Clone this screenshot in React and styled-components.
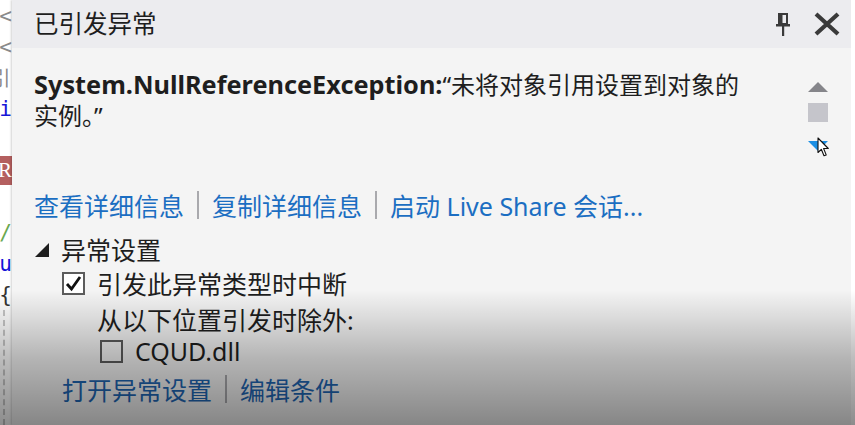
import React from "react";
import styled, { createGlobalStyle } from "styled-components";

const Global = createGlobalStyle`
  html, body { margin: 0; padding: 0; }
  body {
    width: 855px; height: 425px; overflow: hidden; background: #ffffff;
    font-family: "Noto Sans", "Noto Sans CJK SC", sans-serif;
  }
`;

const Screen = styled.div`
  position: relative;
  display: flex;
  width: 855px;
  height: 425px;
  overflow: hidden;
`;

const EditorGutter = styled.div`
  width: 12px;
  flex: none;
  background: #ffffff;
  display: flex;
  flex-direction: column;
`;

const CodeLine = styled.div`
  height: 31px;
  width: 12px;
  overflow: hidden;
  display: flex;
  justify-content: flex-end;
  align-items: center;
  white-space: nowrap;
  font-family: "DejaVu Sans Mono", monospace;
  font-size: 21px;
  color: ${(p) => p.color || "#333"};
`;

const Marked = styled.span`
  background: #b45f5f;
  color: #fff;
  font-family: "Liberation Serif", serif;
  padding: 2px 0;
`;

const DashGuide = styled.div`
  margin-left: 3px;
  flex: 1;
  border-left: 2px dashed #c8c8c8;
`;

const Panel = styled.div`
  width: 839px;
  flex: none;
  display: flex;
  flex-direction: column;
  background: #f4f4f4;
  box-shadow: -1px 0 2px rgba(0, 0, 0, 0.18);
  color: #1e1e1e;
`;

const TitleBar = styled.div`
  height: 48px;
  flex: none;
  display: flex;
  align-items: center;
  background: #ececef;
  padding: 0 9px 0 22px;
`;

const Title = styled.div`
  flex: 1;
  font-size: 24.5px;
  line-height: 30px;
  margin-top: -1px;
`;

const IconButton = styled.div`
  width: ${(p) => p.w}px;
  height: 24px;
  display: flex;
  align-items: center;
  justify-content: center;
  margin-left: ${(p) => p.gap || 0}px;
`;

const Body = styled.div`
  flex: 1;
  display: flex;
  flex-direction: column;
  padding: 21px 0 0 22px;
`;

const MessageArea = styled.div`
  display: flex;
  align-items: flex-start;
  height: 62px;
`;

const Message = styled.div`
  width: 716px;
  font-size: 24px;
  line-height: 31px;
`;

const ExType = styled.span`
  font-weight: 700;
  font-size: 25.3px;
`;

const ScrollBar = styled.div`
  position: relative;
  margin-left: auto;
  margin-right: 23px;
  width: 20px;
  display: flex;
  flex-direction: column;
  align-items: center;
  padding-top: 13px;
`;

const Arrow = styled.div`
  width: 0;
  height: 0;
  border-left: 10px solid transparent;
  border-right: 10px solid transparent;
  ${(p) =>
    p.up
      ? `border-bottom: 10px solid #85858a;`
      : `border-top: 10px solid #1c8fe3;`}
`;

const Thumb = styled.div`
  width: 20px;
  height: 19px;
  background: #c5c5cb;
  margin: 11px 0 19px;
`;

const Cursor = styled.svg`
  position: absolute;
  left: 9px;
  top: 68px;
`;

const LinkRow = styled.div`
  display: flex;
  align-items: center;
  height: 34px;
  margin-top: ${(p) => p.top || 0}px;
  margin-left: ${(p) => p.indent || 0}px;
`;

const Link = styled.span`
  font-size: 25px;
  color: ${(p) => (p.dark ? "#1f66b3" : "#1b6ec2")};
  white-space: nowrap;
`;

const Sep = styled.span`
  width: 2px;
  height: 28px;
  background: #a9a9ad;
  margin: 0 13px;
`;

const Row = styled.div`
  display: flex;
  align-items: center;
  height: ${(p) => p.h || 34}px;
  margin-left: ${(p) => p.indent || 0}px;
  margin-top: ${(p) => p.top || 0}px;
  font-size: 25px;
`;

const Expander = styled.div`
  width: 0;
  height: 0;
  border-left: 14px solid transparent;
  border-bottom: 14px solid #1e1e1e;
  margin: 2px 12px 0 1px;
`;

const Box = styled.div`
  box-sizing: border-box;
  width: 23px;
  height: 23px;
  border: 2px solid #5c5c5c;
  background: ${(p) => (p.checked ? "#ffffff" : "transparent")};
  display: flex;
  align-items: center;
  justify-content: center;
  margin-right: 12px;
  flex: none;
`;

const Fade = styled.div`
  position: absolute;
  left: 0;
  right: 0;
  top: 290px;
  bottom: 0;
  pointer-events: none;
  background: linear-gradient(
    to bottom,
    rgba(0, 0, 0, 0) 0%,
    rgba(0, 0, 0, 0.1) 20%,
    rgba(0, 0, 0, 0.26) 50%,
    rgba(0, 0, 0, 0.45) 100%
  );
`;

const RightStrip = styled.div`
  flex: 1;
  background: #ffffff;
`;

function Pin() {
  return (
    <svg width="16" height="23" viewBox="0 0 16 23">
      <rect x="4" y="1" width="8" height="10" fill="none" stroke="#3a3a3a" strokeWidth="2" />
      <rect x="4" y="1" width="3.5" height="10" fill="#3a3a3a" />
      <rect x="1" y="11" width="14" height="2.5" fill="#3a3a3a" />
      <rect x="7" y="13" width="2.2" height="10" fill="#3a3a3a" />
    </svg>
  );
}

function Close() {
  return (
    <svg width="28" height="24" viewBox="0 0 28 24">
      <path d="M3 2 L25 22 M25 2 L3 22" stroke="#3a3a3a" strokeWidth="4.2" strokeLinecap="butt" />
    </svg>
  );
}

function Check() {
  return (
    <svg width="17" height="17" viewBox="0 0 17 17">
      <path d="M2 9 L6.5 14 L15 2" fill="none" stroke="#111" strokeWidth="2.8" />
    </svg>
  );
}

export default function App() {
  return (
    <>
      <Global />
      <Screen>
        <EditorGutter>
          <CodeLine color="#8a8a8a">&lt;</CodeLine>
          <CodeLine color="#8a8a8a">&lt;</CodeLine>
          <CodeLine color="#8a8a8a">引</CodeLine>
          <CodeLine color="#1515d8">i</CodeLine>
          <CodeLine />
          <CodeLine><Marked>R</Marked></CodeLine>
          <CodeLine />
          <CodeLine color="#6aa84f">/</CodeLine>
          <CodeLine color="#1515d8">u</CodeLine>
          <CodeLine color="#333">{"{"}</CodeLine>
          <DashGuide />
        </EditorGutter>
        <Panel>
          <TitleBar>
            <Title>已引发异常</Title>
            <IconButton w={18}><Pin /></IconButton>
            <IconButton w={30} gap={20}><Close /></IconButton>
          </TitleBar>
          <Body>
            <MessageArea>
              <Message>
                <ExType>System.NullReferenceException:</ExType>“未将对象引用设置到对象的实例。”
              </Message>
              <ScrollBar>
                <Arrow up />
                <Thumb />
                <Arrow />
                <Cursor width="13" height="20" viewBox="0 0 13 20">
                  <path d="M1 1 L1 15.5 L4.3 12.3 L7 18.8 L9.2 17.9 L6.6 11.5 L11.3 11.5 Z" fill="#fff" stroke="#111" strokeWidth="1.1" strokeLinejoin="round" />
                </Cursor>
              </ScrollBar>
            </MessageArea>
            <LinkRow top={57}>
              <Link>查看详细信息</Link>
              <Sep />
              <Link>复制详细信息</Link>
              <Sep />
              <Link>启动 Live Share 会话...</Link>
            </LinkRow>
            <Row top={10}>
              <Expander />
              异常设置
            </Row>
            <Row indent={28}>
              <Box checked><Check /></Box>
              引发此异常类型时中断
            </Row>
            <Row indent={63} top={3} h={31}>从以下位置引发时除外:</Row>
            <Row indent={66}>
              <Box />
              CQUD.dll
            </Row>
            <LinkRow indent={28} top={4}>
              <Link dark>打开异常设置</Link>
              <Sep />
              <Link dark>编辑条件</Link>
            </LinkRow>
          </Body>
        </Panel>
        <RightStrip />
        <Fade />
      </Screen>
    </>
  );
}
